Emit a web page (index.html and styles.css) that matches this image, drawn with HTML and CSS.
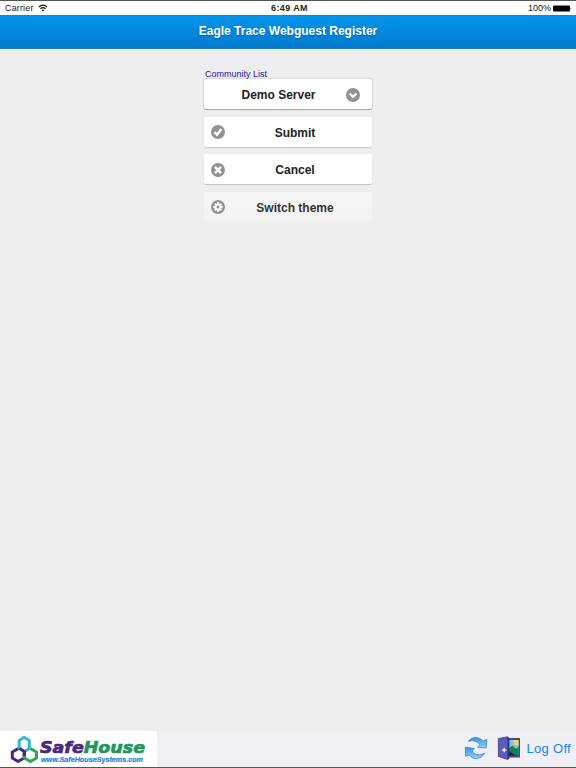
FILE: index.html
```html
<!DOCTYPE html>
<html lang="en">
<head>
    <meta charset="UTF-8">
    <meta name="viewport" content="width=device-width, initial-scale=1.0">
    <title>Eagle Trace Webguest Register</title>
    <link rel="stylesheet" href="styles.css">
</head>
<body>

    <div class="status-bar">
        <div class="status-left">
            <span>Carrier</span>
            <svg class="wifi" viewBox="0 0 10 8" width="10" height="8">
                <path d="M0.9 3 Q5 -0.8 9.1 3 M2.5 4.8 Q5 2.5 7.5 4.8" fill="none" stroke="#111" stroke-width="1.2"/>
                <path d="M3.6 6 Q5 4.9 6.4 6 L5 7.5 Z" fill="#111"/>
            </svg>
        </div>
        <div class="status-time">6:49 AM</div>
        <div class="status-right">
            <span>100%</span>
            <svg class="battery" viewBox="0 0 19 7" width="19" height="7">
                <rect x="0" y="0.5" width="17" height="6" rx="1" fill="#000"/>
                <path d="M17.6 2.2 Q19 3.5 17.6 4.8 Z" fill="#000"/>
            </svg>
        </div>
    </div>

    <header class="header">
        <h1>Eagle Trace Webguest Register</h1>
    </header>

    <main class="content">
        <form class="form">
            <label class="label">Community List</label>
            <button type="button" class="btn select">
                <span>Demo Server</span>
                <svg class="icon" viewBox="0 0 14 14">
                    <circle cx="7" cy="7" r="7" fill="#929292"/>
                    <path d="M3.6 5.5 L7 8.9 L10.4 5.5" fill="none" stroke="#fff" stroke-width="2.3"/>
                </svg>
            </button>
            <button type="button" class="btn">
                <svg class="icon" viewBox="0 0 14 14">
                    <circle cx="7" cy="7" r="7" fill="#929292"/>
                    <path d="M3.4 7.2 L6 9.7 L10.4 4" fill="none" stroke="#fff" stroke-width="2.3"/>
                </svg>
                <span>Submit</span>
            </button>
            <button type="button" class="btn">
                <svg class="icon" viewBox="0 0 14 14">
                    <circle cx="7" cy="7" r="7" fill="#929292"/>
                    <path d="M3.9 3.9 L10.1 10.1 M10.1 3.9 L3.9 10.1" fill="none" stroke="#fff" stroke-width="2.4"/>
                </svg>
                <span>Cancel</span>
            </button>
            <button type="button" class="btn theme">
                <svg class="icon" viewBox="0 0 14 14">
                    <circle cx="7" cy="7" r="7" fill="#929292"/>
                    <path d="M7 2.3 V11.7 M2.3 7 H11.7 M3.7 3.7 L10.3 10.3 M10.3 3.7 L3.7 10.3" stroke="#fff" stroke-width="2"/>
                    <circle cx="7" cy="7" r="3.5" fill="#fff"/>
                    <circle cx="7" cy="7" r="1.5" fill="#929292"/>
                </svg>
                <span>Switch theme</span>
            </button>
        </form>
    </main>

    <footer class="footer">
        <div class="brand">
            <svg viewBox="0 0 157 36" width="157" height="36">
                <g fill="none" stroke-width="3" stroke-linejoin="round">
                    <path d="M24.3 19 V27 L18 30.5 L12.3 27 V21 L18.3 17.5" stroke="#48277c"/>
                    <path d="M19.2 18 V9.5 L24.2 6.3 L29.3 9.5 V17.5 L24.5 20.5" stroke="#35b8cb"/>
                    <path d="M30.5 17.5 L36.5 21 V27 L30.5 30.5 L24.3 27 V23" stroke="#2ca653"/>
                    <path d="M19.5 17.5 L24.3 20.5 V25" stroke="#48277c"/>
                </g>
                <text class="brand-name" x="40" y="22" textLength="105" lengthAdjust="spacingAndGlyphs"><tspan fill="#48277c" stroke="#48277c">Safe</tspan><tspan fill="#20965d" stroke="#20965d">House</tspan></text>
                <text class="brand-url" x="41" y="30.8" textLength="102" lengthAdjust="spacingAndGlyphs">www.SafeHouseSystems.com</text>
            </svg>
        </div>
        <div class="actions">
            <svg class="refresh" viewBox="0 0 24 24" width="24" height="24">
                <defs>
                    <linearGradient id="arrow" x1="0" y1="0" x2="0" y2="1">
                        <stop offset="0" stop-color="#3b94e4"/>
                        <stop offset="1" stop-color="#8bd3fb"/>
                    </linearGradient>
                </defs>
                <g fill="url(#arrow)" stroke="#2c80d0" stroke-width="0.7" stroke-linejoin="round">
                    <path d="M4.5 5.5 C7 0.5 15 0 19 5.2 L22.8 3.4 L22.2 12 L13.5 11.2 L15.8 8.6 C12.5 4.6 8 3.8 4.5 5.5 Z"/>
                    <path d="M20.5 17 C17.5 23.5 9.5 24.6 5.2 19 L1.6 20.4 L1.4 11.2 L10.5 12.6 L8 15 C11.5 19.8 16.5 19.6 20.5 17 Z"/>
                </g>
            </svg>
            <svg class="door" viewBox="0 0 24 24" width="24" height="24">
                <rect x="9" y="2" width="14" height="19.5" fill="#45439c"/>
                <rect x="11" y="4" width="10.5" height="15" fill="#78c4ea"/>
                <path d="M16 4 H21.5 V10 L17 8.5 Z" fill="#ffd34a"/>
                <path d="M12 12.5 L15.5 9.5 L18 12.5 L21.5 11.5 V19 H12 Z" fill="#168248"/>
                <path d="M12 15.5 L19 19.5 H12 Z" fill="#12233c"/>
                <path d="M1.4 2.5 L10.8 0.8 V23.5 L1.4 20.5 Z" fill="#5d5bb8" stroke="#403f90" stroke-width="0.8"/>
                <path d="M10.8 0.8 L12.4 2 V22.8 L10.8 23.5 Z" fill="#343282"/>
                <path d="M7.2 11.7 V16.3 M4.9 14 H9.5" stroke="#dbe5ff" stroke-width="1.5"/>
            </svg>
            <a class="logoff">Log Off</a>
        </div>
    </footer>

</body>
</html>
```

FILE: styles.css
```css
* {
    box-sizing: border-box;
}

body {
    margin: 0;
    height: 768px;
    display: flex;
    flex-direction: column;
    overflow: hidden;
    border-top: 1px solid #555;
    border-bottom: 1px solid #555;
    background-color: #eeeeee;
    font-family: "Liberation Sans", Arial, sans-serif;
}

.status-bar {
    height: 14px;
    display: grid;
    grid-template-columns: 1fr auto 1fr;
    align-items: center;
    padding: 0 4px 0 5px;
    background-color: #fff;
    color: #222;
    font-size: 9px;
    line-height: 14px;
}

.status-left,
.status-right {
    display: flex;
    align-items: center;
    gap: 4px;
}

.status-left {
    letter-spacing: 0.15px;
}

.status-right {
    justify-content: flex-end;
    gap: 2px;
}

.status-time {
    padding-left: 2px;
    font-weight: bold;
    letter-spacing: 0.4px;
}

.header {
    height: 34px;
    display: flex;
    align-items: center;
    justify-content: center;
    padding-bottom: 2px;
    background: linear-gradient(#0095ec, #007bcd);
    border-top: 1px solid #2e7fb6;
    border-bottom: 1px solid #2380bd;
}

.header h1 {
    margin: 0;
    color: #fff;
    font-size: 12px;
    line-height: 16px;
    text-shadow: 0 1px 1px rgba(0, 60, 110, 0.4);
}

.content {
    flex: 1;
}

.form {
    width: 168px;
    margin: 19px auto 0;
    display: flex;
    flex-direction: column;
    gap: 7.6px;
}

.label {
    height: 11px;
    margin-bottom: -7.6px;
    padding-left: 1px;
    color: #24149b;
    font-size: 9px;
    line-height: 12px;
}

.btn {
    height: 30px;
    display: grid;
    grid-template-columns: 14px 1fr;
    align-items: center;
    padding: 1px 7px 0;
    border: none;
    border-radius: 2px;
    background-color: #fff;
    box-shadow: 0 1px 1px rgba(0, 0, 0, 0.18);
    color: #222;
    font-family: inherit;
    font-size: 12px;
    font-weight: bold;
}

.btn span {
    grid-column: 2;
    padding-top: 1px;
}

.select {
    box-shadow: 0 0 2px rgba(0, 0, 0, 0.25), 0 1px 1px rgba(0, 0, 0, 0.25);
    grid-template-columns: 0 1fr 14px;
    padding-right: 12px;
}

.theme {
    background: linear-gradient(#f7f7f7, #f2f2f2);
    box-shadow: none;
    color: #333;
}

.icon {
    width: 14px;
    height: 14px;
}

.footer {
    height: 36px;
    display: flex;
    justify-content: space-between;
    background-color: #efeff4;
}

.brand {
    width: 157px;
    background-color: #fff;
}

.brand svg {
    display: block;
    overflow: visible;
}

.brand-name {
    font-family: "DejaVu Sans", sans-serif;
    font-size: 16px;
    font-weight: bold;
    font-style: italic;
    stroke-width: 0.7px;
}

.brand-url {
    fill: #2381e5;
    stroke: #2381e5;
    stroke-width: 0.2px;
    font-family: "Liberation Sans", Arial, sans-serif;
    font-size: 6.6px;
    font-weight: bold;
    font-style: italic;
}

.actions {
    display: flex;
    align-items: center;
    padding: 0 5px 2px 0;
}

.door {
    margin: 0 5px 0 9px;
}

.logoff {
    color: #1684f8;
    font-size: 13px;
    letter-spacing: 0.3px;
}
```
